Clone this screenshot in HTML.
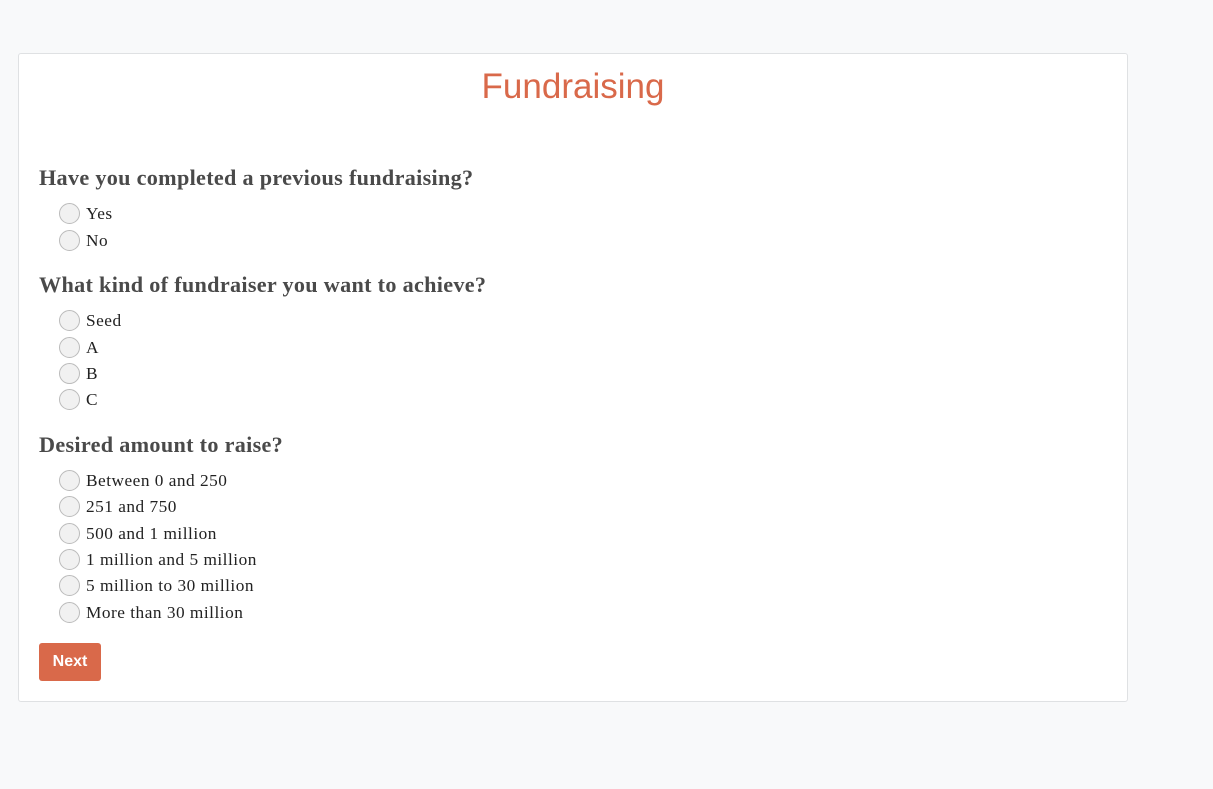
<html><head><style>
body{margin:0;background:#f8f9fa;width:1213px;height:789px;font-family:"Liberation Serif",serif;}
.card{position:absolute;left:18px;top:53px;width:1108px;height:647px;background:#fff;border:1px solid #dfe1e3;border-radius:3px;}
h1{position:absolute;top:67px;left:0;width:1146px;text-align:center;margin:0;font-family:"Liberation Sans",sans-serif;font-weight:normal;font-size:35px;color:#d9694a;}
.q{position:absolute;left:39px;font-size:22.2px;font-weight:bold;color:#4a4a4a;letter-spacing:0.3px;margin:0}
.o{position:absolute;left:59px;font-size:17.3px;color:#222;height:22px;line-height:22px;letter-spacing:0.5px}
.o i{display:inline-block;width:21px;height:21px;border:1px solid #bbb;border-radius:50%;background:#f1f1f1;vertical-align:middle;margin-right:6px;margin-top:-3px;box-sizing:border-box;}
.btn{position:absolute;left:39px;top:643px;width:62px;height:38px;background:#d9694a;border-radius:3px;color:#fff;font-family:"Liberation Sans",sans-serif;font-weight:bold;font-size:16px;text-align:center;line-height:38px}
</style></head><body>
<div class="card"></div>
<h1>Fundraising</h1>
<div class="q" style="top:165px">Have you completed a previous fundraising?</div>
<div class="o" style="top:203px"><i></i>Yes</div>
<div class="o" style="top:230px"><i></i>No</div>
<div class="q" style="top:272px">What kind of fundraiser you want to achieve?</div>
<div class="o" style="top:310px"><i></i>Seed</div>
<div class="o" style="top:337px"><i></i>A</div>
<div class="o" style="top:363px"><i></i>B</div>
<div class="o" style="top:389px"><i></i>C</div>
<div class="q" style="top:432px">Desired amount to raise?</div>
<div class="o" style="top:470px"><i></i>Between 0 and 250</div>
<div class="o" style="top:496px"><i></i>251 and 750</div>
<div class="o" style="top:523px"><i></i>500 and 1 million</div>
<div class="o" style="top:549px"><i></i>1 million and 5 million</div>
<div class="o" style="top:575px"><i></i>5 million to 30 million</div>
<div class="o" style="top:602px"><i></i>More than 30 million</div>
<div class="btn">Next</div>
</body></html>
